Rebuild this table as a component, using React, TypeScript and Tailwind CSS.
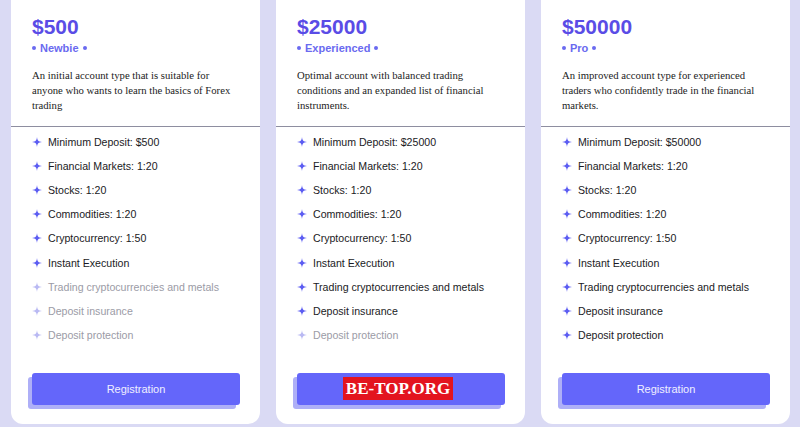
import React from "react";

type Feature = { label: string; active: boolean };

interface Plan {
  price: string;
  level: string;
  description: string;
  features: Feature[];
  watermark?: boolean;
}

const base = [
  "Financial Markets: 1:20",
  "Stocks: 1:20",
  "Commodities: 1:20",
  "Cryptocurrency: 1:50",
  "Instant Execution",
];

function buildFeatures(deposit: string, extras: boolean[]): Feature[] {
  const list: Feature[] = [{ label: `Minimum Deposit: ${deposit}`, active: true }];
  base.forEach((label) => list.push({ label, active: true }));
  const rest = ["Trading cryptocurrencies and metals", "Deposit insurance", "Deposit protection"];
  rest.forEach((label, i) => list.push({ label, active: extras[i] }));
  return list;
}

const plans: Plan[] = [
  {
    price: "$500",
    level: "Newbie",
    description:
      "An initial account type that is suitable for anyone who wants to learn the basics of Forex trading",
    features: buildFeatures("$500", [false, false, false]),
  },
  {
    price: "$25000",
    level: "Experienced",
    description:
      "Optimal account with balanced trading conditions and an expanded list of financial instruments.",
    features: buildFeatures("$25000", [true, true, false]),
    watermark: true,
  },
  {
    price: "$50000",
    level: "Pro",
    description:
      "An improved account type for experienced traders who confidently trade in the financial markets.",
    features: buildFeatures("$50000", [true, true, true]),
  },
];

function Sparkle({ active }: { active: boolean }) {
  return (
    <svg
      width="10"
      height="10"
      viewBox="0 0 10 10"
      className={active ? "text-[#5b5cf2]" : "text-[#b9b9f3]"}
    >
      <path
        d="M5 0C5.4 3.6 6.4 4.6 10 5C6.4 5.4 5.4 6.4 5 10C4.6 6.4 3.6 5.4 0 5C3.6 4.6 4.6 3.6 5 0Z"
        fill="currentColor"
      />
    </svg>
  );
}

function PlanCard({ plan }: { plan: Plan }) {
  return (
    <div className="-mt-[12px] h-[436px] bg-white rounded-xl flex flex-col font-['Liberation_Sans',Arial,sans-serif]">
      {/* Header */}
      <div className="px-[21px] pt-[28px]">
        <div className="text-[21px] leading-[21px] font-bold text-[#5a4ce6]">{plan.price}</div>
        <div className="mt-[4px] flex items-center gap-[4px] text-[11px] leading-[14px] font-bold text-[#6a6af0]">
          <span className="w-[4px] h-[4px] rounded-full bg-[#6a6af0]" />
          {plan.level}
          <span className="w-[4px] h-[4px] rounded-full bg-[#6a6af0]" />
        </div>
        <p className="mt-[13px] h-[45px] text-[10.7px] leading-[15px] text-[#1c1c1c] font-['Liberation_Serif','Times_New_Roman',serif]">
          {plan.description}
        </p>
      </div>

      <div className="mt-[13px] h-px bg-[#8e8ea0]" />

      {/* Features */}
      <ul className="px-[21px] pt-[3px] flex flex-col">
        {plan.features.map((f) => (
          <li key={f.label} className="h-[24.1px] flex items-center gap-[6px]">
            <Sparkle active={f.active} />
            <span
              className={`text-[10.6px] leading-[14px] ${
                f.active ? "text-[#1a1a24]" : "text-[#9b9ba6]"
              }`}
            >
              {f.label}
            </span>
          </li>
        ))}
      </ul>

      {/* Button */}
      <div className="px-[21px] mt-[26px]">
        <div className="relative">
          <button className="w-[208px] h-[32px] rounded-[3px] bg-[#6466fa] text-[11px] text-[#f0f0ff] shadow-[-4px_4px_0_#aeaff7]">
            Registration
          </button>
          {plan.watermark && (
            <div className="absolute left-[46px] top-[4px] w-[110px] h-[23px] bg-[#e3141f] flex items-center justify-center text-white font-bold text-[17px] leading-none font-['Liberation_Serif',serif]">
              BE-TOP.ORG
            </div>
          )}
        </div>
      </div>
    </div>
  );
}

export default function App() {
  return (
    <div className="w-[800px] h-[427px] overflow-hidden bg-[#dadaf4] pl-[11px] pr-[10px]">
      <div className="grid grid-cols-3 gap-4">
        {plans.map((p) => (
          <PlanCard key={p.price} plan={p} />
        ))}
      </div>
    </div>
  );
}
